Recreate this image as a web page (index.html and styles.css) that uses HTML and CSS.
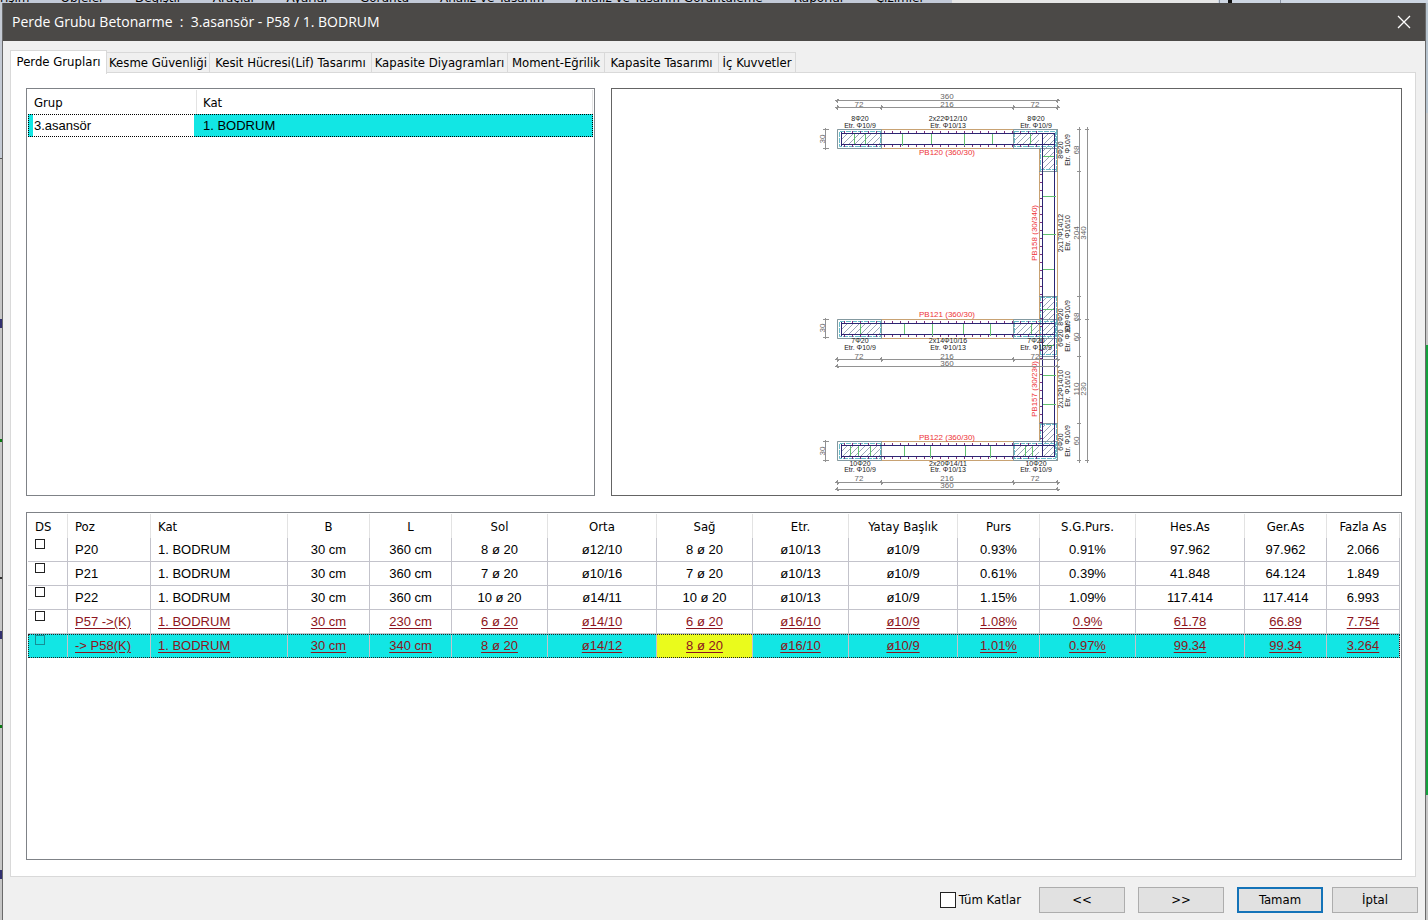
FILE: index.html
```html
<!DOCTYPE html>
<html lang="tr">
<head>
<meta charset="utf-8">
<title>Perde Grubu Betonarme</title>
<link rel="stylesheet" href="styles.css">
</head>
<body>
<div class="app-menu" aria-hidden="true">
  <span>rişim</span><span>Objeler</span><span>Değiştir</span><span>Araçlar</span><span>Ayarlar</span><span>Görüntü</span><span>Analiz ve Tasarım</span><span>Analiz ve Tasarım Görüntüleme</span><span>Raporlar</span><span>Çizimler</span><i class="app-tool"></i>
</div>
<div class="workspace">
<div class="edge edge-left"></div>
<main class="dialog">
  <header class="titlebar">
    <h1>Perde Grubu Betonarme  :  3.asansör - P58 / 1. BODRUM</h1>
    <button class="close" type="button" aria-label="Kapat"><svg width="14" height="14" viewBox="0 0 14 14"><path d="M1 1L13 13M13 1L1 13"/></svg></button>
  </header>
  <div class="tabs" role="tablist">
    <button class="tab active" type="button" role="tab" aria-selected="true">Perde Grupları</button>
    <button class="tab" type="button" role="tab">Kesme Güvenliği</button>
    <button class="tab" type="button" role="tab">Kesit Hücresi(Lif) Tasarımı</button>
    <button class="tab" type="button" role="tab">Kapasite Diyagramları</button>
    <button class="tab" type="button" role="tab">Moment-Eğrilik</button>
    <button class="tab" type="button" role="tab">Kapasite Tasarımı</button>
    <button class="tab" type="button" role="tab">İç Kuvvetler</button>
  </div>
  <section class="page">
    <div class="top">
      <div class="panel">
        <table class="groups">
          <colgroup><col class="g1"><col class="g2"></colgroup>
          <thead><tr><th>Grup</th><th>Kat</th></tr></thead>
          <tbody><tr><td class="name">3.asansör</td><td>1. BODRUM</td></tr></tbody>
        </table>
      </div>
      <div class="panel drawing">
        <svg viewBox="612 89 789 406" role="img" aria-label="Perde kesiti">
          <defs>
            <pattern id="hatch" width="6" height="6" patternUnits="userSpaceOnUse"><path d="M-1 7L7 -1M-1 1L1 -1M5 7L7 5" class="hatch-line"/></pattern>
            <g id="beam">
              <path class="outer" d="M837.5 .5H1057.5M837.5 19.5H1057.5"/>
              <path class="outer-end" d="M881.5 .5H837.5V19.5H881.5ZM1013.5 .5H1057.5V19.5H1013.5Z"/>
              <path class="teal" d="M881 2.5H839.5V17.5H881M1014 2.5H1055.5V17.5H1014M880.5 3V17M1014.5 3V17"/>
              <rect class="hatch" x="842" y="5" width="38" height="11"/>
              <rect class="hatch" x="1015" y="5" width="24" height="11"/>
              <path class="bar" d="M841.5 4.5H1055M841.5 15.5H1055M841.5 3V17"/>
              <path class="ticks" d="M844 3H1040M844 17H1040"/>
            </g>
            <g id="dims">
              <path class="dim" d="M835 .5H1060M835 7.5H1060M837.5 -1V3M1057.5 -1V3M837.5 5V10M881.5 5V10M1013.5 5V10M1057.5 5V10M836 2L839 -1M1056 2L1059 -1M836 9L839 6M880 9L883 6M1012 9L1015 6M1056 9L1059 6"/>
            </g>
          </defs>

          <use href="#dims" y="100"/>
          <g class="num"><text x="947" y="99">360</text><text x="859" y="107">72</text><text x="947" y="107">216</text><text x="1035" y="107">72</text></g>

          <!-- column outline and reinforcement -->
          <path class="outer" d="M1039.5 148V442M1057.5 129V461"/>
          <path class="teal" d="M1040.5 148V171M1056.5 130V171M1040.5 296V356M1056.5 296V356M1040.5 423V442M1056.5 423V460M1040 169.5H1057M1040 297.5H1057M1040 354.5H1057M1040 424.5H1057"/>
          <path class="outer-end" d="M1039 171.5H1058M1039 296.5H1058M1039 356.5H1058M1039 423.5H1058"/>
          <g class="hatch"><rect x="1043" y="134" width="12" height="35"/><rect x="1043" y="298" width="12" height="56"/><rect x="1043" y="425" width="12" height="32"/></g>
          <use href="#beam" y="129"/>
          <use href="#beam" y="319"/>
          <use href="#beam" y="441"/>
          <path class="bar" d="M1042.5 133V457M1054.5 133V457"/>
          <path class="ticks" d="M1041 174V440"/>
          <path class="green" d="M854.5 134V144M865.5 134V144M902.5 134V146M931.5 134V144M964.5 134V146M992.5 134V144M1030.5 134V144M860.5 324V334M904.5 324V334M932.5 324V336M963.5 324V334M990.5 324V336M1031.5 324V334M850.5 446V456M858.5 446V456M870.5 446V456M904.5 446V456M930.5 446V458M965.5 446V456M990.5 446V458M1025.5 446V456M1032.5 446V456M1043 156.5H1054M1043 196.5H1056M1043 234.5H1056M1043 269.5H1054M1043 309.5H1054M1043 345.5H1054M1043 375.5H1056M1043 404.5H1056"/>

          <g class="note">
            <text x="860" y="121">8Φ20</text><text x="860" y="128">Etr. Φ10/9</text>
            <text x="948" y="121">2x22Φ12/10</text><text x="948" y="128">Etr. Φ10/13</text>
            <text x="1036" y="121">8Φ20</text><text x="1036" y="128">Etr. Φ10/9</text>
            <text x="860" y="343">7Φ20</text><text x="860" y="350">Etr. Φ10/9</text>
            <text x="948" y="343">2x14Φ10/16</text><text x="948" y="350">Etr. Φ10/13</text>
            <text x="1036" y="343">7Φ20</text><text x="1036" y="350">Etr. Φ10/9</text>
            <text x="860" y="466">10Φ20</text><text x="860" y="472">Etr. Φ10/9</text>
            <text x="948" y="466">2x20Φ14/11</text><text x="948" y="472">Etr. Φ10/13</text>
            <text x="1036" y="466">10Φ20</text><text x="1036" y="472">Etr. Φ10/9</text>
            <g class="up">
              <text transform="translate(1063 150) rotate(-90)">8Φ20</text><text transform="translate(1070 150) rotate(-90)">Etr. Φ10/9</text>
              <text transform="translate(1063 233) rotate(-90)">2x17Φ14/12</text><text transform="translate(1070 233) rotate(-90)">Etr. Φ16/10</text>
              <text transform="translate(1063 317) rotate(-90)">8Φ20</text><text transform="translate(1070 316) rotate(-90)">Etr. Φ10/9</text>
              <text transform="translate(1063 338) rotate(-90)">6Φ20</text><text transform="translate(1070 336) rotate(-90)">Etr. Φ10/9</text>
              <text transform="translate(1063 389) rotate(-90)">2x12Φ14/10</text><text transform="translate(1070 389) rotate(-90)">Etr. Φ16/10</text>
              <text transform="translate(1063 442) rotate(-90)">6Φ20</text><text transform="translate(1070 441) rotate(-90)">Etr. Φ10/9</text>
            </g>
          </g>
          <g class="mark">
            <text x="947" y="155">PB120 (360/30)</text><text x="947" y="317">PB121 (360/30)</text><text x="947" y="440">PB122 (360/30)</text>
            <text transform="translate(1037 233) rotate(-90)">PB158 (30/340)</text>
            <text transform="translate(1037 389) rotate(-90)">PB157 (30/230)</text>
          </g>

          <use href="#dims" transform="translate(0 367) scale(1 -1)"/>
          <use href="#dims" transform="translate(0 490) scale(1 -1)"/>
          <g class="num">
            <text x="859" y="359">72</text><text x="947" y="359">216</text><text x="1035" y="359">72</text><text x="947" y="366">360</text>
            <text x="859" y="481">72</text><text x="947" y="481">216</text><text x="1035" y="481">72</text><text x="947" y="488">360</text>
            <text transform="translate(825 139) rotate(-90)">30</text><text transform="translate(825 328) rotate(-90)">30</text><text transform="translate(825 451) rotate(-90)">30</text>
            <text transform="translate(1079 150) rotate(-90)">68</text><text transform="translate(1079 233) rotate(-90)">204</text><text transform="translate(1079 317) rotate(-90)">68</text><text transform="translate(1079 337) rotate(-90)">60</text><text transform="translate(1079 389) rotate(-90)">110</text><text transform="translate(1079 441) rotate(-90)">60</text>
            <text transform="translate(1086 233) rotate(-90)">340</text><text transform="translate(1086 389) rotate(-90)">230</text>
          </g>
          <path class="dim" d="M825.5 128V150M823 129.5H829M823 148.5H829M825.5 318V339M823 319.5H829M823 337.5H829M825.5 440V462M823 441.5H829M823 460.5H829M1079.5 127V463M1087.5 127V463M1077 129.5H1081M1085 129.5H1089M1077 171.5H1081M1077 296.5H1081M1077 319.5H1081M1085 319.5H1089M1077 337.5H1081M1077 356.5H1081M1077 423.5H1081M1077 460.5H1081M1085 460.5H1089"/>
        </svg>
      </div>
    </div>
    <div class="panel bottom">
      <table class="walls">
        <colgroup><col class="w40"><col class="w83"><col class="w137"><col class="w82"><col class="w82"><col class="w96"><col class="w109"><col class="w96"><col class="w96"><col class="w109"><col class="w82"><col class="w96"><col class="w109"><col class="w82"><col class="w73"></colgroup>
        <thead><tr><th>DS</th><th>Poz</th><th>Kat</th><th>B</th><th>L</th><th>Sol</th><th>Orta</th><th>Sağ</th><th>Etr.</th><th>Yatay Başlık</th><th>Purs</th><th>S.G.Purs.</th><th>Hes.As</th><th>Ger.As</th><th>Fazla As</th></tr></thead>
        <tbody>
          <tr><td><input type="checkbox" aria-label="DS P20"></td><td>P20</td><td>1. BODRUM</td><td>30 cm</td><td>360 cm</td><td>8 ø 20</td><td>ø12/10</td><td>8 ø 20</td><td>ø10/13</td><td>ø10/9</td><td>0.93%</td><td>0.91%</td><td>97.962</td><td>97.962</td><td>2.066</td></tr>
          <tr><td><input type="checkbox" aria-label="DS P21"></td><td>P21</td><td>1. BODRUM</td><td>30 cm</td><td>360 cm</td><td>7 ø 20</td><td>ø10/16</td><td>7 ø 20</td><td>ø10/13</td><td>ø10/9</td><td>0.61%</td><td>0.39%</td><td>41.848</td><td>64.124</td><td>1.849</td></tr>
          <tr><td><input type="checkbox" aria-label="DS P22"></td><td>P22</td><td>1. BODRUM</td><td>30 cm</td><td>360 cm</td><td>10 ø 20</td><td>ø14/11</td><td>10 ø 20</td><td>ø10/13</td><td>ø10/9</td><td>1.15%</td><td>1.09%</td><td>117.414</td><td>117.414</td><td>6.993</td></tr>
          <tr class="fail"><td><input type="checkbox" aria-label="DS P57"></td><td>P57 -&gt;(K)</td><td>1. BODRUM</td><td>30 cm</td><td>230 cm</td><td>6 ø 20</td><td>ø14/10</td><td>6 ø 20</td><td>ø16/10</td><td>ø10/9</td><td>1.08%</td><td>0.9%</td><td>61.78</td><td>66.89</td><td>7.754</td></tr>
          <tr class="fail selected"><td><input type="checkbox" aria-label="DS P58"></td><td>-&gt; P58(K)</td><td>1. BODRUM</td><td>30 cm</td><td>340 cm</td><td>8 ø 20</td><td>ø14/12</td><td class="edit">8 ø 20</td><td>ø16/10</td><td>ø10/9</td><td>1.01%</td><td>0.97%</td><td>99.34</td><td>99.34</td><td>3.264</td></tr>
        </tbody>
      </table>
    </div>
  </section>
  <footer class="footer">
    <label class="all"><input type="checkbox">Tüm Katlar</label>
    <button class="btn" type="button">&lt;&lt;</button>
    <button class="btn" type="button">&gt;&gt;</button>
    <div class="confirm">
      <button class="btn primary" type="button">Tamam</button>
      <button class="btn" type="button">İptal</button>
    </div>
  </footer>
</main>
<div class="edge edge-right"></div>
</div>
</body>
</html>
```

FILE: styles.css
```css
* { box-sizing: border-box; }
body {
  margin: 0;
  height: 100vh;
  display: flex;
  flex-direction: column;
  overflow: hidden;
  background: #c9cfda;
  color: #000;
  font: 13px/16px "DejaVu Sans Condensed", "Noto Sans", sans-serif;
}
button { font: inherit; color: inherit; padding: 0; margin: 0; border-radius: 0; }
input[type="checkbox"] { appearance: none; border: 1px solid #222; background: #fff; }
input[type="checkbox"]:checked { background: #1473b8; }

/* main window behind the dialog */
.app-menu {
  flex: none;
  height: 3px;
  overflow: hidden;
  display: flex;
  align-items: flex-end;
  gap: 31px;
  white-space: nowrap;
  background: linear-gradient(90deg, #c3cad8 0 952px, #e6e6e6 952px 1218px, #cdd6e2 1218px);
  font: 12px/10px "DejaVu Sans", sans-serif;
}
.app-menu span { flex: none; }
.app-tool { width: 62px; height: 3px; margin-left: 264px; border: solid #8a93a3; border-width: 0 1px; background: linear-gradient(90deg, transparent 8px, #111 8px 12px, transparent 12px); }
.workspace { flex: 1; min-height: 0; display: flex; }
.edge { flex: none; width: 2px; }
.edge-left { background: linear-gradient(#c4cad4 0 155px, #555 155px 156px, #c6c6c6 156px 316px, #323070 316px 325px, #c6c6c6 325px 436px, #087a10 436px 439px, #c6c6c6 439px 574px, #333 574px 576px, #c6c6c6 576px 628px, #323070 628px 636px, #c6c6c6 636px 722px, #087a10 722px 725px, #c6c6c6 725px 867px, #323070 867px 876px, #c6c6c6 876px); }
.edge-right { background: linear-gradient(#b7c4cf 0 110px, #c6c6c6 110px 342px, #12a23c 342px 792px, #c6c6c6 792px); }

.dialog {
  flex: 1;
  min-width: 0;
  display: flex;
  flex-direction: column;
  background: #f0f0f0;
  border: solid #6a6a6a;
  border-width: 0 1px;
}
.titlebar {
  flex: none;
  height: 38px;
  display: flex;
  align-items: center;
  justify-content: space-between;
  padding: 0 14px 0 9px;
  background: #4b4947;
  color: #fff;
}
.titlebar h1 { margin: 0; font: 400 14px/20px "Open Sans", sans-serif; white-space: pre; }
.close { border: 0; background: none; height: 14px; }
.close svg { display: block; fill: none; stroke: #fff; stroke-width: 1.3; }

.tabs {
  flex: none;
  display: grid;
  grid-template-columns: 97px 103px 162px 136px 97px 114px 77px;
  align-items: end;
  height: 32px;
  padding: 9px 0 0 7px;
}
.tab { height: 21px; border: 1px solid #d9d9d9; border-left: 0; border-bottom: 0; background: #f0f0f0; white-space: nowrap; }
.tab.active { height: 24px; margin-bottom: -1px; padding-bottom: 2px; border-left: 1px solid #d9d9d9; background: #fff; position: relative; }

.page {
  flex: 1;
  min-height: 0;
  display: flex;
  flex-direction: column;
  gap: 16px;
  margin: -1px 9px 0 7px;
  padding: 15px 13px 16px 15px;
  border: 1px solid #d9d9d9;
  background: #fff;
}
.top { flex: 408 1 0; min-height: 0; display: grid; grid-template-columns: 569fr 791fr; gap: 16px; }
.panel { min-width: 0; min-height: 0; border: 1px solid #7f8287; background: #fff; padding: 1px; overflow: hidden; }
.drawing { padding: 0; border-color: #646464; }
.bottom { flex: 344 1 0; }

table { width: 100%; border-collapse: separate; border-spacing: 0; table-layout: fixed; }
th { font-weight: 400; padding: 1px 6px 0; text-align: left; border-right: 1px solid #e3e3e3; white-space: nowrap; }
td { font: 13px/16px "Liberation Sans", Arial, sans-serif; padding: 0 6px; white-space: nowrap; }

.g1 { width: 169px; }
.groups th { height: 24px; }
.groups td { height: 23px; background: #12e6e4; }
.groups .name { background: linear-gradient(90deg, #12e6e4 5px, #fff 5px 166px, #12e6e4 166px); }
.groups tbody tr { outline: 1px dotted #000; outline-offset: -1px; }

.walls th { height: 24px; }
.walls td { height: 24px; border-right: 1px solid #c3c3cb; border-bottom: 1px solid #c3c3cb; }
.walls th, .walls td { text-align: center; }
.walls th:nth-child(-n+3), .walls td:nth-child(-n+3) { text-align: left; padding-left: 7px; }
.walls td:first-child { vertical-align: top; }
.walls input { width: 10px; height: 10px; margin: 1px 0 0; display: block; }
.fail { color: #8d1420; }
.fail td { text-decoration: underline; text-underline-offset: 2px; }
.selected td { background: #12e6e4; border-bottom: 0; }
.selected .edit { background: #eafb1c; }
.selected { outline: 1px dotted #222; outline-offset: -1px; }
.selected input[type="checkbox"] { background: transparent; border-color: #168f96; }
.w40 { width: 40px; }
.w73 { width: 73px; }
.w82 { width: 82px; }
.w83 { width: 83px; }
.w96 { width: 96px; }
.w109 { width: 109px; }
.w137 { width: 137px; }

.footer { flex: none; display: flex; justify-content: flex-end; align-items: center; gap: 13px; height: 43px; padding: 3px 7px 0 0; }
.all { display: flex; align-items: center; gap: 3px; margin-right: 5px; }
.all input { width: 16px; height: 16px; margin: 0; }
.confirm { display: flex; gap: 9px; }
.btn { width: 86px; height: 26px; border: 1px solid #adadad; background: #e1e1e1; }
.btn.primary { border: 2px solid #1473b8; }

.drawing svg { display: block; width: 100%; height: 100%; fill: none; }
.drawing text { stroke: none; text-anchor: middle; font-family: "Liberation Sans", Arial, sans-serif; }
.num text { font-size: 8px; fill: #666; }
.note text { font-size: 7px; fill: #222; }
.mark text { font-size: 8px; fill: #ee3338; }
.dim { stroke: #929292; }
.outer { stroke: #c8a273; }
.outer-end { stroke: #8499a0; }
.teal { stroke: #69bdca; stroke-dasharray: 5 1; }
.bar { stroke: #2c2673; }
.ticks { stroke: #80307c; stroke-width: 2; stroke-dasharray: 1 7; }
.green { stroke: #62bf70; }
.hatch { fill: url(#hatch); }
.hatch-line { stroke: #9aa6b8; stroke-width: 1; }
```
